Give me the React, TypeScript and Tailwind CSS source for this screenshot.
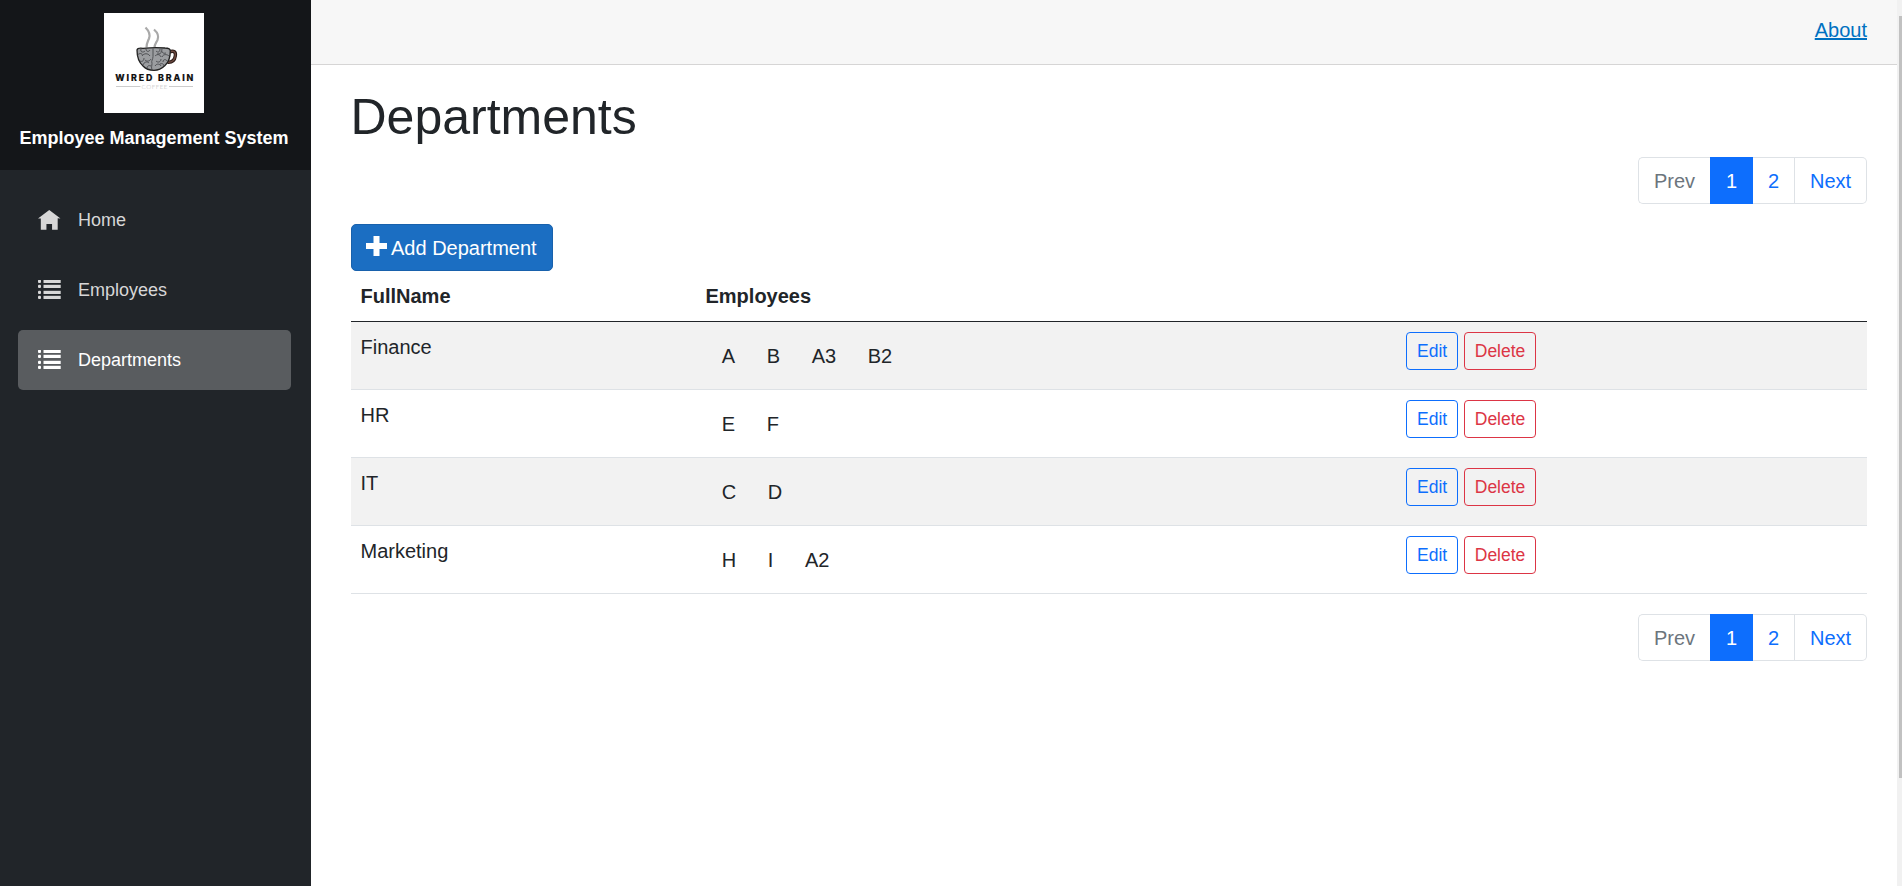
import React from "react";

type Department = { name: string; employees: string[] };

const departments: Department[] = [
  { name: "Finance", employees: ["A", "B", "A3", "B2"] },
  { name: "HR", employees: ["E", "F"] },
  { name: "IT", employees: ["C", "D"] },
  { name: "Marketing", employees: ["H", "I", "A2"] },
];

function HomeIcon() {
  return (
    <svg viewBox="0 0 8 8" className="h-[22.5px] w-[22.5px] shrink-0 fill-current">
      <path d="M4 0l-4 3h1v4h2v-2h2v2h2v-4.03l1 .03-4-3z" />
    </svg>
  );
}

function ListIcon() {
  return (
    <svg viewBox="0 0 23 20" className="h-5 w-[23px] shrink-0 fill-current">
      {[0, 5, 11, 16].map((y) => (
        <g key={y}>
          <rect x="0" y={y - 0.2} width="3" height="3.2" rx="1" />
          <rect x="5.500" y={y - 0.2} width="17.200" height="3.200" />
        </g>
      ))}
    </svg>
  );
}

function PlusIcon() {
  return (
    <svg viewBox="0 0 21 20" className="mb-[3px] h-5 w-[21px] fill-current">
      <path d="M7.500 0v7h-7.500v6h7.500v7h6v-7h7.500v-6h-7.500v-7z" />
    </svg>
  );
}

function Logo() {
  return (
    <svg viewBox="0 0 100 100" className="h-[100px] w-[100px] bg-white">
      <g fill="none" stroke="#a9a9a9" strokeWidth="2.200">
        <path d="M41.500 14.500c3.500 3.500 5 7 3.500 11-1.500 3.500-2.500 5-2.500 9" />
        <path d="M50 16.500c4 3.500 5 7 3.500 10.500-1.500 3-3 4.500-3 7.500" />
      </g>
      <path d="M65 39c5-2 7 0 6.300 4-.6 4-3.300 6.500-7.800 6.200" fill="none" stroke="#2b1b17" strokeWidth="3.400" />
      <path d="M65 39c5-2 7 0 6.300 4-.6 4-3.300 6.500-7.800 6.200" fill="none" stroke="#6d4a40" strokeWidth="1.500" />
      <path
        d="M33 37c.5-2 4-2 6-1.700 8-.8 16-.8 22-.3 4 0 5.300.8 5.300 3 0 6-1.300 11-5.300 14.500-3.500 3.500-7 4.800-11 4.800s-8-1-11-4.300c-4.500-4-6-9.500-6-16z"
        fill="#9b9da0"
        stroke="#222"
        strokeWidth="1.300"
      />
      <g fill="none" stroke="#3d3f42" strokeWidth="0.800">
        <path d="M33.500 42c2-2 4-2 5 0M37 36c-1 3 2 4 4 2M42 36c0 3 3 3 4 1M49 35.500v8c0 3-2 4-1 7 0 2-1 4 0 6M38 43c2-3 6-3 8 0M36 48c2 1 4 0 4-3M41 47c2 2 5 1 6-1M39 52c1-3 4-4 6-2M43 55c0-2 2-3 4-2" />
        <path d="M52 38c2 2 4 1 4-2M58 36c-1 3 1 5 4 4M51 43c2-2 5-2 6 1M58 44c1-3 5-3 7-1M52 48c2 2 5 1 5-2M59 49c0-3 3-3 4-1M51 53c2-3 5-2 6 0M56 51c2-1 4 0 4 2M53 41c3 0 5-1 4-3" />
      </g>
      <text x="11.300" y="68" textLength="78" fontSize="8.800" fontWeight="800" fill="#111" stroke="#111" strokeWidth="0.150" fontFamily="Inter, sans-serif">
        WIRED BRAIN
      </text>
      <text x="37.500" y="75.700" textLength="26" fontSize="6.300" fontWeight="300" fill="#b5b5b5" fontFamily="Lato, sans-serif">
        COFFEE
      </text>
      <path d="M12 73.500h24.500M65 73.500h24" stroke="#cccccc" strokeWidth="1" />
    </svg>
  );
}

function NavItem({ icon, label, active }: { icon: React.ReactNode; label: string; active?: boolean }) {
  return (
    <a
      className={
        active
          ? "flex h-[60px] items-center rounded-[5px] bg-[#595c5f] pl-5 text-[18px] text-white"
          : "flex h-[60px] items-center rounded-[5px] pl-5 text-[18px] text-[#d7d7d7]"
      }
    >
      <span className="flex h-5 w-10 items-start">{icon}</span>
      {label}
    </a>
  );
}

function Pagination() {
  return (
    <nav className="flex h-[47px] justify-end leading-[30px]">
      <span className="w-[72px] rounded-l-[5px] border border-r-0 border-[#dee2e6] pt-[8px] pl-[15px] text-[#6c757d]">Prev</span>
      <span className="w-[43px] bg-[#0d6efd] pt-[9px] text-center text-white">1</span>
      <span className="w-[42px] border border-l-0 border-[#dee2e6] pt-[8px] text-center text-[#0d6efd]">2</span>
      <span className="w-[72px] rounded-r-[5px] border border-l-0 border-[#dee2e6] pt-[8px] pl-[15px] text-[#0d6efd]">Next</span>
    </nav>
  );
}

export default function App() {
  return (
    <div className="flex h-[886px] overflow-hidden bg-white font-['Liberation_Sans',Arial,sans-serif] text-[20px] leading-[30px] text-[#212529]">
      <aside className="w-[311px] shrink-0 bg-[#212529]">
        <div className="flex h-[170px] flex-col items-center bg-[#141619] pt-[13px] pr-[3px]">
          <Logo />
          <div className="mt-[12px] text-[18px] leading-[27px] font-bold whitespace-nowrap text-white">Employee Management System</div>
        </div>
        <nav className="flex flex-col gap-[10px] pt-5 pr-5 pl-[18px]">
          <NavItem icon={<HomeIcon />} label="Home" />
          <NavItem icon={<ListIcon />} label="Employees" />
          <NavItem icon={<ListIcon />} label="Departments" active />
        </nav>
      </aside>

      <main className="min-w-0 grow">
        <header className="flex h-[65px] justify-end border-b border-[#d6d5d5] bg-[#f7f7f7] pt-[15px] pr-[30px]">
          <a className="text-[#0071c1] underline">About</a>
        </header>
        <section className="pr-[30px] pl-10">
          <h1 className="-ml-[0.5px] pt-[22px] text-[50px] leading-[60px]">Departments</h1>
          <div className="pt-[10px]">
            <Pagination />
          </div>
          <button className="mt-5 flex h-[47px] w-[202px] items-center rounded-[5px] border border-[#1861ac] bg-[#1b6ec2] pl-[14px] text-white">
            <PlusIcon />
            <span className="pl-1">Add Department</span>
          </button>
          <div className="grid h-[51px] grid-cols-[345px_700px_1fr] border-b border-[#212529] pt-[10px] pl-[9.5px] font-bold">
            <div>FullName</div>
            <div>Employees</div>
          </div>
          {departments.map((d, i) => (
            <div
              key={d.name}
              className={
                i % 2 === 0
                  ? "grid h-[68px] grid-cols-[345.5px_700px_1fr] border-b border-[#dee2e6] bg-[#f2f2f2] pt-[10px] pl-[9.5px]"
                  : "grid h-[68px] grid-cols-[345.5px_700px_1fr] border-b border-[#dee2e6] pt-[10px] pl-[9.5px]"
              }
            >
              <div>{d.name}</div>
              <div className="flex pt-[9px]">
                {d.employees.map((e) => (
                  <span key={e} className="px-[15.8px]">
                    {e}
                  </span>
                ))}
              </div>
              <div className="flex items-start gap-[5.6px] text-[17.5px] leading-[26px]">
                <button className="h-[38px] rounded-[4px] border border-[#0d6efd] px-[10px] text-[#0d6efd]">Edit</button>
                <button className="h-[38px] rounded-[4px] border border-[#dc3545] px-[10px] text-[#dc3545]">Delete</button>
              </div>
            </div>
          ))}
          <div className="pt-5">
            <Pagination />
          </div>
        </section>
      </main>

      <div className="w-[5px] shrink-0 bg-[#f1f1f1] pt-4 pl-[2px]">
        <div className="h-[762px] bg-[#c1c1c1]" />
      </div>
    </div>
  );
}
